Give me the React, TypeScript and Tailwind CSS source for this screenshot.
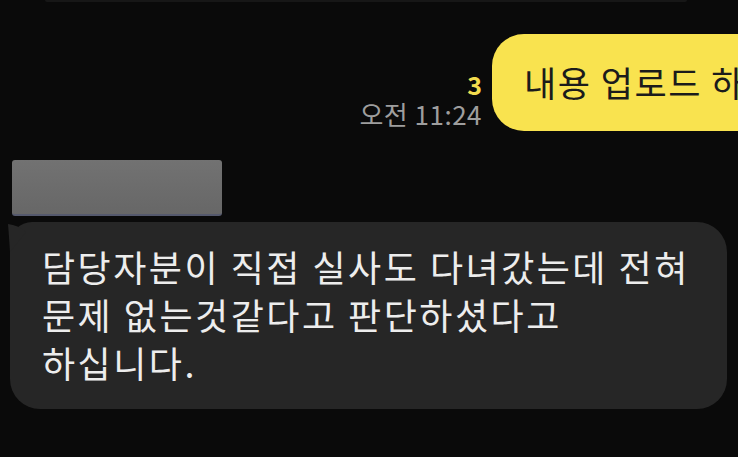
import React from 'react';

const font = { fontFamily: '"Noto Sans CJK KR", "Noto Sans", sans-serif' };

const BubbleTail = () => (
  <svg
    className="absolute left-0 top-0 overflow-visible"
    width="28"
    height="30"
    viewBox="0 0 28 30"
  >
    <path d="M-2 2 Q8 3 16 10 Q8 20 0 30 Q-1 14 -2 2 Z" fill="#262626" />
  </svg>
);

const App: React.FC = () => {
  return (
    <div
      className="relative w-[738px] h-[457px] overflow-hidden bg-[#0a0a0a]"
      style={font}
    >
      {/* bottom edge of the previous bubble */}
      <div className="ml-[45px] w-[642px] h-[2px] rounded-b-sm bg-[#171717]" />

      {/* my message */}
      <div className="flex items-end mt-[32px]">
        <div className="w-[482px] shrink-0 flex flex-col items-end mb-[3px]">
          <span className="mb-[4px] text-[25px] leading-[24px] font-semibold text-[#f2dc4e]">3</span>
          <span className="text-[26px] leading-[28px] tracking-[0.5px] text-[#9e9e9e] whitespace-nowrap">
            오전 11:24
          </span>
        </div>
        <div className="ml-[10px] shrink-0 h-[97px] flex items-center pl-[32px] pr-[40px] rounded-[32px] bg-[#f9e34f] text-[#1b1b1b] text-[35px] tracking-[1.5px] whitespace-nowrap">
          내용 업로드 하
        </div>
      </div>

      {/* blurred profile name */}
      <div className="ml-[12px] mt-[29px] w-[210px] h-[56px] rounded-[3px] bg-gradient-to-b from-[#727272] to-[#676767] border-b-2 border-[#55596d]" />

      {/* their message */}
      <div className="relative ml-[10px] mt-[6px] w-[717px] rounded-[30px] rounded-tl-[22px] bg-[#262626] pt-[20px] pb-[23px] pl-[32px] text-[36px] tracking-[2.5px] leading-[48px] text-[#ededed]">
        <BubbleTail />
        <p className="relative whitespace-nowrap">
          담당자분이 직접 실사도 다녀갔는데 전혀
          <br />
          문제 없는것같다고 판단하셨다고
          <br />
          하십니다.
        </p>
      </div>
    </div>
  );
};

export default App;
